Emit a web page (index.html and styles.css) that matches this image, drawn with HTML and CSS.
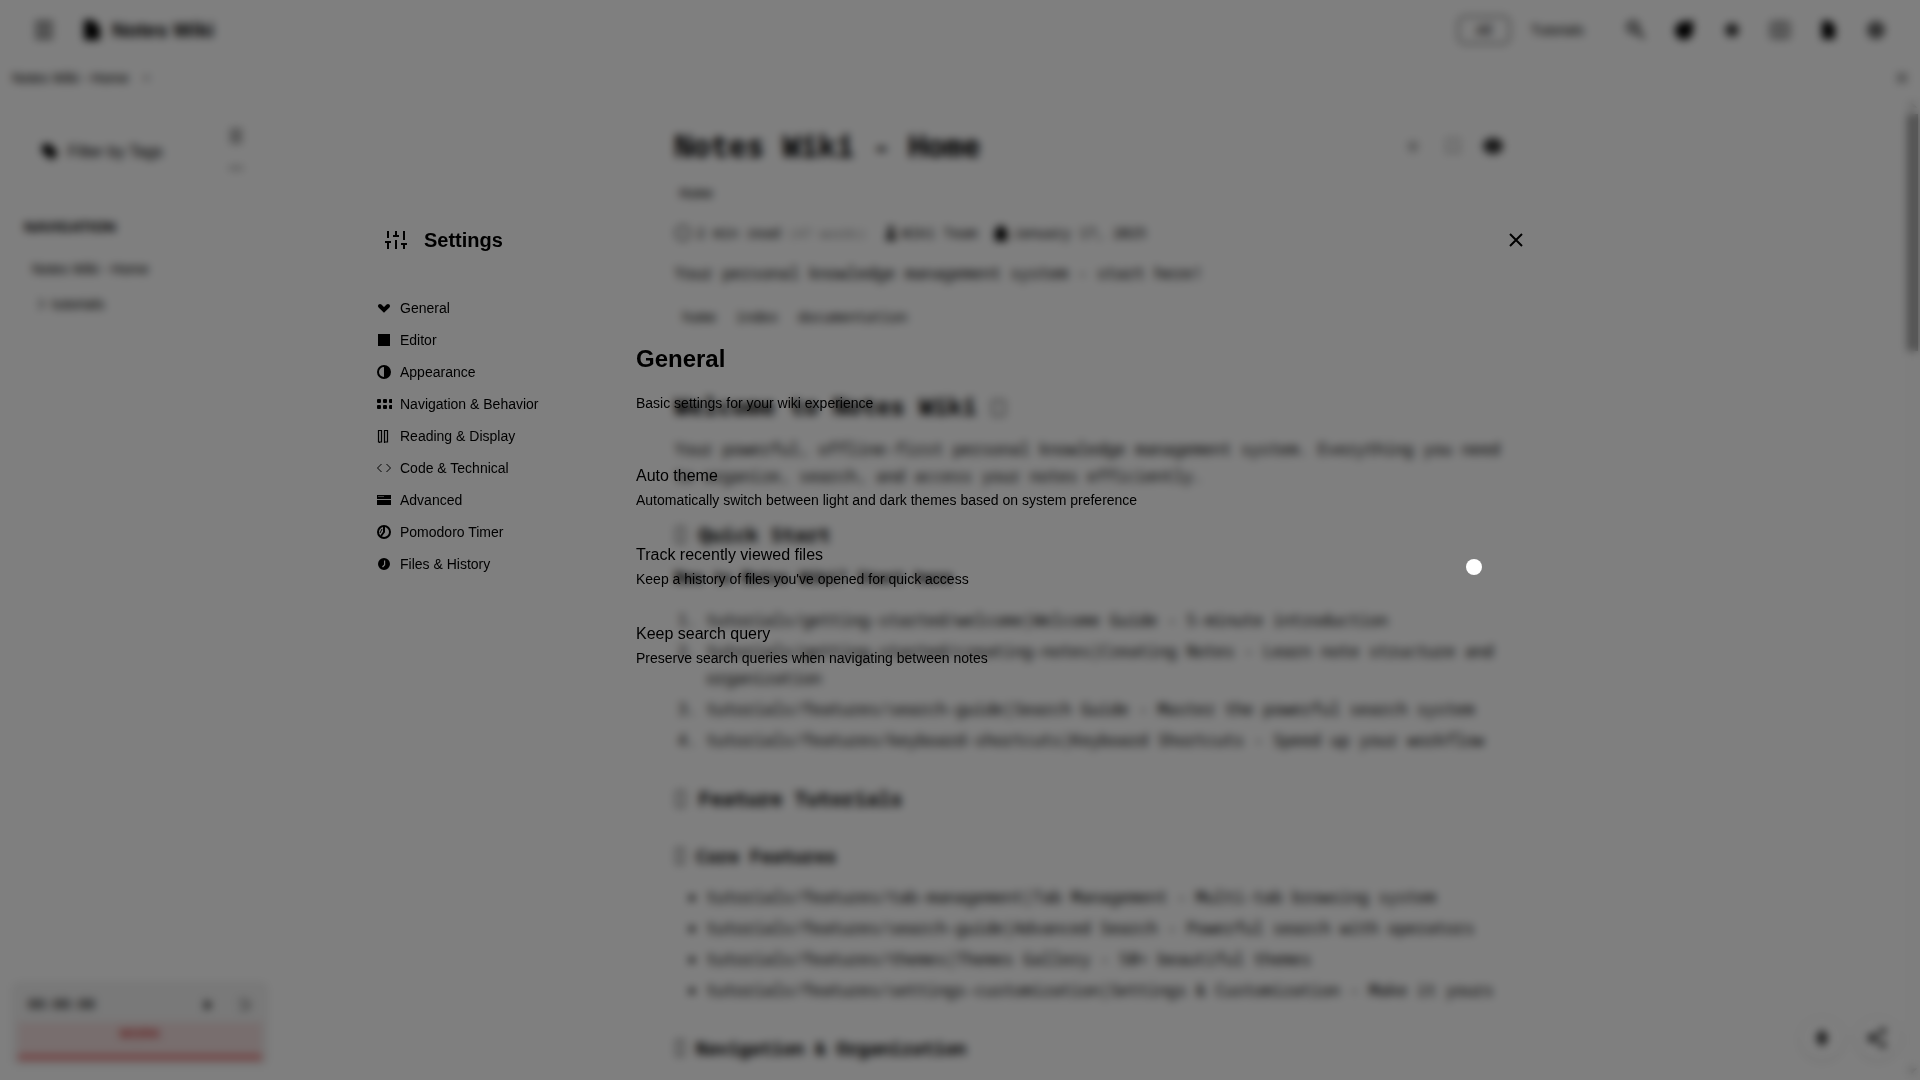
FILE: index.html
```html
<!DOCTYPE html>
<html lang="en">
<head>
<meta charset="utf-8">
<title>Notes Wiki</title>
<link rel="stylesheet" href="styles.css">
</head>
<body>
<div class="app">
  <header class="topbar">
    <button class="icon-btn" aria-label="Toggle sidebar"><svg class="icon-lg muted" viewBox="0 0 20 20" fill="none" stroke="currentColor" stroke-width="4"><path d="M1 3h18M1 10h18M1 17h18"/></svg></button>
    <a class="brand" href="#"><svg class="icon-lg" viewBox="0 0 20 20" fill="currentColor"><path d="M2 0h9l7 7v13H2z"/></svg>Notes Wiki</a>
    <nav class="contexts">
      <button class="context active">All</button>
      <button class="context">Tutorials</button>
    </nav>
    <div class="tools">
      <button class="icon-btn" aria-label="Search"><svg class="icon-lg soft" viewBox="0 0 20 20" fill="none" stroke="currentColor" stroke-width="3"><circle cx="7" cy="7" r="5"/><path d="M11 11l7 7"/></svg></button>
      <button class="icon-btn" aria-label="Theme"><svg class="icon-lg" viewBox="0 0 20 20" fill="currentColor"><path d="M13 2l6-2v10a9 9 0 1 1-6-8z"/></svg></button>
      <button class="icon-btn" aria-label="Focus"><svg class="icon-lg soft" viewBox="0 0 20 20" fill="currentColor"><path d="M10 3l5 2 2 5-2 5-5 2-5-2-2-5 2-5z"/></svg></button>
      <button class="icon-btn" aria-label="Split view"><svg class="icon-lg muted" viewBox="0 0 20 20" fill="none" stroke="currentColor" stroke-width="2"><rect x="1" y="2" width="18" height="16" rx="2"/><path d="M2 7h16M2 13h16M10 2v16"/></svg></button>
      <button class="icon-btn" aria-label="Notes"><svg class="icon-lg" viewBox="0 0 20 20" fill="currentColor"><path d="M4 1h8l5 5v13H4z"/></svg></button>
      <button class="icon-btn" aria-label="Settings"><svg class="icon-lg muted" viewBox="0 0 20 20" fill="currentColor"><circle cx="10" cy="10" r="9"/></svg></button>
    </div>
  </header>
  <div class="tabs">
    <a class="tab" href="#">Notes Wiki - Home</a>
    <button class="tab-close muted" aria-label="Close tab">×</button>
    <button class="tab-close muted push" aria-label="Close all tabs"><svg class="icon-sm" viewBox="0 0 12 12" fill="none" stroke="currentColor" stroke-width="2"><path d="M1 1l10 10M11 1L1 11"/></svg></button>
  </div>
  <div class="body">
    <aside class="sidebar">
      <div class="filter">
        <svg class="icon-md" viewBox="0 0 16 16" fill="currentColor"><path d="M0 2l2-2h6l8 9-6 7-10-8z"/></svg>
        <span class="filter-label">Filter by Tags</span>
        <div class="filter-tools muted">
          <svg class="icon-md" viewBox="0 0 16 16" fill="none" stroke="currentColor" stroke-width="2"><path d="M2 2h12M2 6h12M2 10h12M2 14h12"/></svg>
          <svg class="icon-md" viewBox="0 0 16 16" fill="none" stroke="currentColor" stroke-width="2"><path d="M1 8h14"/></svg>
        </div>
      </div>
      <h2 class="side-title">NAVIGATION</h2>
      <nav class="tree">
        <a href="#">Notes Wiki - Home</a>
        <a class="folder" href="#"><svg class="icon-sm muted" viewBox="0 0 12 12" fill="none" stroke="currentColor" stroke-width="2"><path d="M3 1l5 5-5 5"/></svg>tutorials</a>
      </nav>
      <section class="timer">
        <div class="timer-row">
          <span class="clock">00:00:00</span>
          <button class="mini" aria-label="Start"><svg class="icon-sm" viewBox="0 0 12 12" fill="currentColor"><path d="M3 1l7 5-7 5z"/></svg></button>
          <button class="mini" aria-label="Reset"><svg class="icon-sm muted" viewBox="0 0 12 12" fill="none" stroke="currentColor" stroke-width="2"><path d="M1 2h6a4 4 0 0 1 0 8H2"/></svg></button>
        </div>
        <div class="phase">WORK</div>
      </section>
    </aside>
    <main class="page">
      <article class="note">
        <div class="note-head">
          <h1>Notes Wiki - Home</h1>
          <button class="icon-btn small faint" aria-label="Favorite"><svg class="icon-md" viewBox="0 0 16 16" fill="currentColor"><path d="M8 1l2 4 5 1-4 4 1 5-4-2-4 2 1-5-4-4 5-1z"/></svg></button>
          <button class="icon-btn small faint" aria-label="Bookmark"><svg class="icon-md" viewBox="0 0 16 16" fill="none" stroke="currentColor" stroke-width="2"><path d="M2 1h12v14l-6-3-6 3z"/></svg></button>
          <button class="icon-btn small" aria-label="View"><svg class="icon-lg soft" viewBox="0 0 20 20" fill="currentColor"><ellipse cx="10" cy="10" rx="10" ry="8"/></svg></button>
        </div>
        <p class="crumb">Home</p>
        <p class="meta">
          <svg class="icon-md muted" viewBox="0 0 16 16" fill="none" stroke="currentColor" stroke-width="2"><circle cx="8" cy="8" r="7"/></svg><span>2 min read</span><small>(47 words)</small>
          <svg class="icon-md after" viewBox="0 0 16 16" fill="currentColor"><circle cx="8" cy="4" r="3"/><path d="M3 15c0-9 10-9 10 0z"/></svg><span>Wiki Team</span>
          <svg class="icon-md after" viewBox="0 0 16 16" fill="currentColor"><path d="M2 4h3V1h6v3h3v12H2z"/></svg><span>January 17, 2025</span>
        </p>
        <p class="lead">Your personal knowledge management system - start here!</p>
        <p class="labels"><span>home</span><span>index</span><span>documentation</span></p>
        <h2>Welcome to Notes Wiki <i class="glyph"></i></h2>
        <p>Your powerful, offline-first personal knowledge management system. Everything you need to organize, search, and access your notes efficiently.</p>
        <h3><i class="glyph"></i> Quick Start</h3>
        <p><strong>New to Notes Wiki? Start here</strong></p>
        <ol>
          <li>tutorials/getting-started/welcome|Welcome Guide - 5-minute introduction</li>
          <li>tutorials/getting-started/creating-notes|Creating Notes - Learn note structure and organization</li>
          <li>tutorials/features/search-guide|Search Guide - Master the powerful search system</li>
          <li>tutorials/features/keyboard-shortcuts|Keyboard Shortcuts - Speed up your workflow</li>
        </ol>
        <h3><i class="glyph"></i> Feature Tutorials</h3>
        <h4><i class="glyph"></i> Core Features</h4>
        <ul>
          <li>tutorials/features/tab-management|Tab Management - Multi-tab browsing system</li>
          <li>tutorials/features/search-guide|Advanced Search - Powerful search with operators</li>
          <li>tutorials/features/themes|Themes Gallery - 50+ beautiful themes</li>
          <li>tutorials/features/settings-customization|Settings &amp; Customization - Make it yours</li>
        </ul>
        <h4><i class="glyph"></i> Navigation &amp; Organization</h4>
      </article>
    </main>
    <div class="scrollbar" aria-hidden="true">
      <svg class="arrow" viewBox="0 0 15 15"><path d="M3 10l4-5 5 5z"/></svg>
      <div class="track"><div class="thumb"></div></div>
      <svg class="arrow" viewBox="0 0 15 15"><path d="M3 5l4 5 5-5z"/></svg>
    </div>
  </div>
  <div class="fabs">
    <button class="fab" aria-label="New note"><svg class="icon-lg" viewBox="0 0 20 20" fill="currentColor"><path d="M10 1l6 9-6 9-6-9z"/></svg></button>
    <button class="fab" aria-label="Share"><svg class="icon-lg" viewBox="0 0 20 20" fill="currentColor" stroke="currentColor" stroke-width="2"><circle cx="4" cy="10" r="3"/><circle cx="15" cy="3" r="2"/><circle cx="15" cy="17" r="2"/><path d="M15 3L4 10l11 7" fill="none"/></svg></button>
  </div>
</div>

<div class="overlay">
  <div class="modal" role="dialog" aria-labelledby="settings-title">
    <header class="modal-head">
      <svg class="icon-xl" viewBox="0 0 24 24" fill="none" stroke="currentColor" stroke-width="2"><path d="M4 21v-7M4 10V3M12 21v-9M12 8V3M20 21v-5M20 12V3M1 14h6M9 8h6M17 16h6"/></svg>
      <h2 id="settings-title">Settings</h2>
      <button class="close" aria-label="Close settings"><svg class="icon-xl" viewBox="0 0 24 24" fill="none" stroke="currentColor" stroke-width="2"><path d="M18 6L6 18M6 6l12 12"/></svg></button>
    </header>
    <div class="modal-body">
      <nav class="modal-nav">
        <button><svg class="icon-md" viewBox="0 0 16 16" fill="none" stroke="currentColor" stroke-width="4" stroke-linecap="round"><path d="M4 6l4 4 4-4"/></svg>General</button>
        <button><svg class="icon-md" viewBox="0 0 16 16" fill="currentColor"><path d="M2 2h12v12H2z"/></svg>Editor</button>
        <button><svg class="icon-md" viewBox="0 0 16 16"><circle cx="8" cy="8" r="6" fill="none" stroke="currentColor" stroke-width="2"/><path d="M8 2a6 6 0 0 1 0 12z" fill="currentColor"/></svg>Appearance</button>
        <button><svg class="icon-md" viewBox="0 0 16 16" fill="currentColor"><rect x="1" y="3" width="4" height="4" rx="1"/><rect x="7" y="3" width="4" height="4" rx="1"/><rect x="13" y="3" width="4" height="4" rx="1"/><rect x="1" y="9" width="4" height="4" rx="1"/><rect x="7" y="9" width="4" height="4" rx="1"/><rect x="13" y="9" width="4" height="4" rx="1"/></svg>Navigation &amp; Behavior</button>
        <button><svg class="icon-md" viewBox="0 0 16 16" fill="none" stroke="currentColor" stroke-width="1.200"><path d="M2.500 2.500h3v11.500h-3zM8.500 2.500h3v11.500h-3zM3.500 14v1M8.500 14v1"/></svg>Reading &amp; Display</button>
        <button><svg class="icon-md" viewBox="0 0 16 16" fill="none" stroke="currentColor"><path d="M5.500 4L1.500 8l4 4M10.500 4l4 4-4 4"/></svg>Code &amp; Technical</button>
        <button><svg class="icon-md" viewBox="0 0 16 16" fill="currentColor"><path d="M1 3h14v4H1zM1 8h14v5H1z"/><path d="M2 4.500h6" stroke="#444"/></svg>Advanced</button>
        <button><svg class="icon-md" viewBox="0 0 16 16" fill="none" stroke="currentColor" stroke-width="2"><circle cx="8" cy="8" r="6"/><path d="M8 3v5l-3 4"/><path d="M6 5l-2 4" stroke-width="1"/></svg>Pomodoro Timer</button>
        <button><svg class="icon-md" viewBox="0 0 16 16" fill="currentColor" fill-rule="evenodd"><path d="M8 2a6 6 0 1 0 0 12A6 6 0 0 0 8 2zM8 4.500h1.200V9L7 11.500 6 10.500 8 8.500z"/></svg>Files &amp; History</button>
      </nav>
      <section class="panel">
        <h3>General</h3>
        <p class="intro">Basic settings for your wiki experience</p>
        <label class="setting"><span class="setting-text"><span class="name">Auto theme</span><span class="desc">Automatically switch between light and dark themes based on system preference</span></span><input type="checkbox" class="toggle"></label>
        <label class="setting"><span class="setting-text"><span class="name">Track recently viewed files</span><span class="desc">Keep a history of files you've opened for quick access</span></span><input type="checkbox" class="toggle" checked></label>
        <label class="setting"><span class="setting-text"><span class="name">Keep search query</span><span class="desc">Preserve search queries when navigating between notes</span></span><input type="checkbox" class="toggle"></label>
      </section>
    </div>
  </div>
</div>
</body>
</html>
```
FILE: styles.css
```css
* { box-sizing: border-box; }
html, body { height: 100%; margin: 0; }
body {
  overflow: hidden;
  background: #fff;
  color: #000;
  font: 14px/20px "Liberation Sans", Arial, sans-serif;
}
h1, h2, h3, h4, p { margin: 0; }
a { color: inherit; text-decoration: none; }
button { padding: 0; border: 0; background: none; color: inherit; font: inherit; }
svg { display: block; flex: none; }
.icon-sm { width: 12px; height: 12px; }
.icon-md { width: 16px; height: 16px; }
.icon-lg { width: 20px; height: 20px; }
.icon-xl { width: 24px; height: 24px; }
.soft { opacity: 0.8; }
.muted { opacity: 0.6; }
.faint { opacity: 0.3; }

.app { display: flex; flex-direction: column; height: 100vh; }
.topbar { display: flex; align-items: center; height: 60px; padding: 0 24px; }
.icon-btn { display: grid; place-items: center; width: 40px; height: 40px; }
.icon-btn.small { width: 32px; height: 32px; }
.brand { display: flex; align-items: center; gap: 10px; margin-left: 18px; font-size: 20px; font-weight: bold; }
.contexts { display: flex; gap: 4px; margin-left: auto; margin-right: 15px; }
.context { height: 28px; padding: 0 16px; border: 1px solid transparent; border-radius: 6px; }
.context.active { width: 52px; border-color: #000; }
.tools { display: flex; gap: 8px; }

.tabs { display: flex; align-items: center; height: 36px; padding: 0 12px; }
.tab-close { display: grid; place-items: center; width: 12px; height: 20px; margin-left: 12px; }
.tab-close.push { margin-left: auto; }

.body { display: flex; flex: 1; min-height: 0; }
.sidebar { display: flex; flex-direction: column; width: 280px; padding: 28px 14px 16px; }
.filter { display: flex; align-items: center; gap: 10px; padding: 0 24px 0 28px; height: 56px; }
.filter-label { font-size: 16px; }
.filter-tools { display: grid; gap: 16px; margin-left: auto; margin-right: -2px; }
.side-title { margin: 36px 10px 0; font-size: 15px; line-height: 22px; }
.tree { display: grid; gap: 15px; margin-top: 21px; padding-left: 18px; }
.folder { display: flex; align-items: center; gap: 4px; padding-left: 4px; font-size: 15px; }
.timer { padding: 4px; margin-top: auto; border-radius: 4px; background: #f2f2f2; box-shadow: 0 0 4px #ccc; }
.timer-row { display: flex; align-items: center; gap: 24px; height: 34px; padding: 0 12px 0 10px; }
.clock { margin-right: auto; font: bold 14px/20px "Liberation Mono", monospace; color: #333; }
.phase { height: 38px; border-bottom: 5px solid #e57373; background: #f0dcdc; color: #c44; font-size: 13px; font-weight: bold; line-height: 24px; text-align: center; }

.page { flex: 1; min-width: 0; overflow: hidden; }
.note {
  max-width: 836px;
  margin: 0 auto;
  padding-right: 2px;
  font: 16px/27px "Noto Sans Mono", "DejaVu Sans Mono", monospace;
}
.note-head { display: flex; align-items: center; gap: 8px; height: 100px; }
.note-head h1 { margin-right: auto; font-size: 30px; line-height: 36px; }
.crumb { padding-left: 5px; font-size: 14px; line-height: 20px; margin-top: -13px; }
.meta { display: flex; align-items: center; margin-top: 20px; font-size: 14px; line-height: 20px; }
.meta span { margin-left: 6px; }
.meta small { margin-left: 8px; font-size: 13px; opacity: 0.5; }
.meta .after { margin-left: 16px; }
.meta .after + span { margin-left: 3px; }
.lead { margin-top: 17px; }
.labels { display: flex; gap: 4px; margin-top: 20px; font-size: 14px; line-height: 20px; }
.labels span { padding: 0 8px; }
.note h2 { margin: 63px 0 14px; font-size: 24px; line-height: 32px; }
.note h3 { margin: 32px 0 16px; font-size: 20px; line-height: 26px; }
.note h4 { margin: 32px 0 16px; font-size: 18px; line-height: 24px; }
.note ol, .note ul { margin: 16px 0 0; padding-left: 32px; }
.note li { margin-bottom: 4px; }
/* placeholder box one character wide, in place of the heading emoji */
.glyph { display: inline-block; width: calc(1ch - 2px); height: 16px; margin: 0 1px; border: 1px solid #000; vertical-align: -1px; }

.scrollbar { display: flex; flex-direction: column; width: 15px; background: #fcfcfc; }
.arrow { width: 15px; height: 18px; fill: #aaa; }
.track { flex: 1; padding: 0 2px; }
.thumb { height: 25%; background: #a0a0a0; }

.fabs { position: absolute; right: 20px; bottom: 20px; display: flex; gap: 12px; color: #222; }
.fab { display: grid; place-items: center; width: 44px; height: 44px; border-radius: 50%; background: #fff; box-shadow: 0 1px 4px #ccc; }

.overlay {
  position: fixed; inset: 0;
  display: grid; place-items: center;
  background: rgba(0, 0, 0, 0.5);
  backdrop-filter: blur(4px);
}
.modal { display: flex; flex-direction: column; width: 90%; max-width: 1200px; min-height: 672px; }
.modal-head { display: flex; align-items: center; gap: 16px; padding: 16px 24px; }
.modal-head h2 { font-size: 20px; line-height: 24px; }
.close { display: grid; place-items: center; width: 40px; height: 40px; margin-left: auto; }
.modal-body { display: flex; flex: 1; }
.modal-nav { width: 244px; padding: 16px; }
.modal-nav button { display: flex; align-items: center; gap: 8px; width: 100%; height: 32px; }
.panel { flex: 1; padding: 68px 74px 0 32px; }
.panel h3 { font-size: 24px; line-height: 30px; }
.intro { margin: 19px 0 35px; }
.setting { display: flex; align-items: center; justify-content: space-between; height: 79px; }
.setting-text { display: grid; gap: 4px; }
.name { font-size: 16px; }
.toggle { appearance: none; width: 44px; height: 24px; margin: 0; padding: 4px; }
.toggle:checked::before { content: ""; display: block; width: 16px; height: 16px; margin-left: auto; border-radius: 50%; background: #fff; }
```
